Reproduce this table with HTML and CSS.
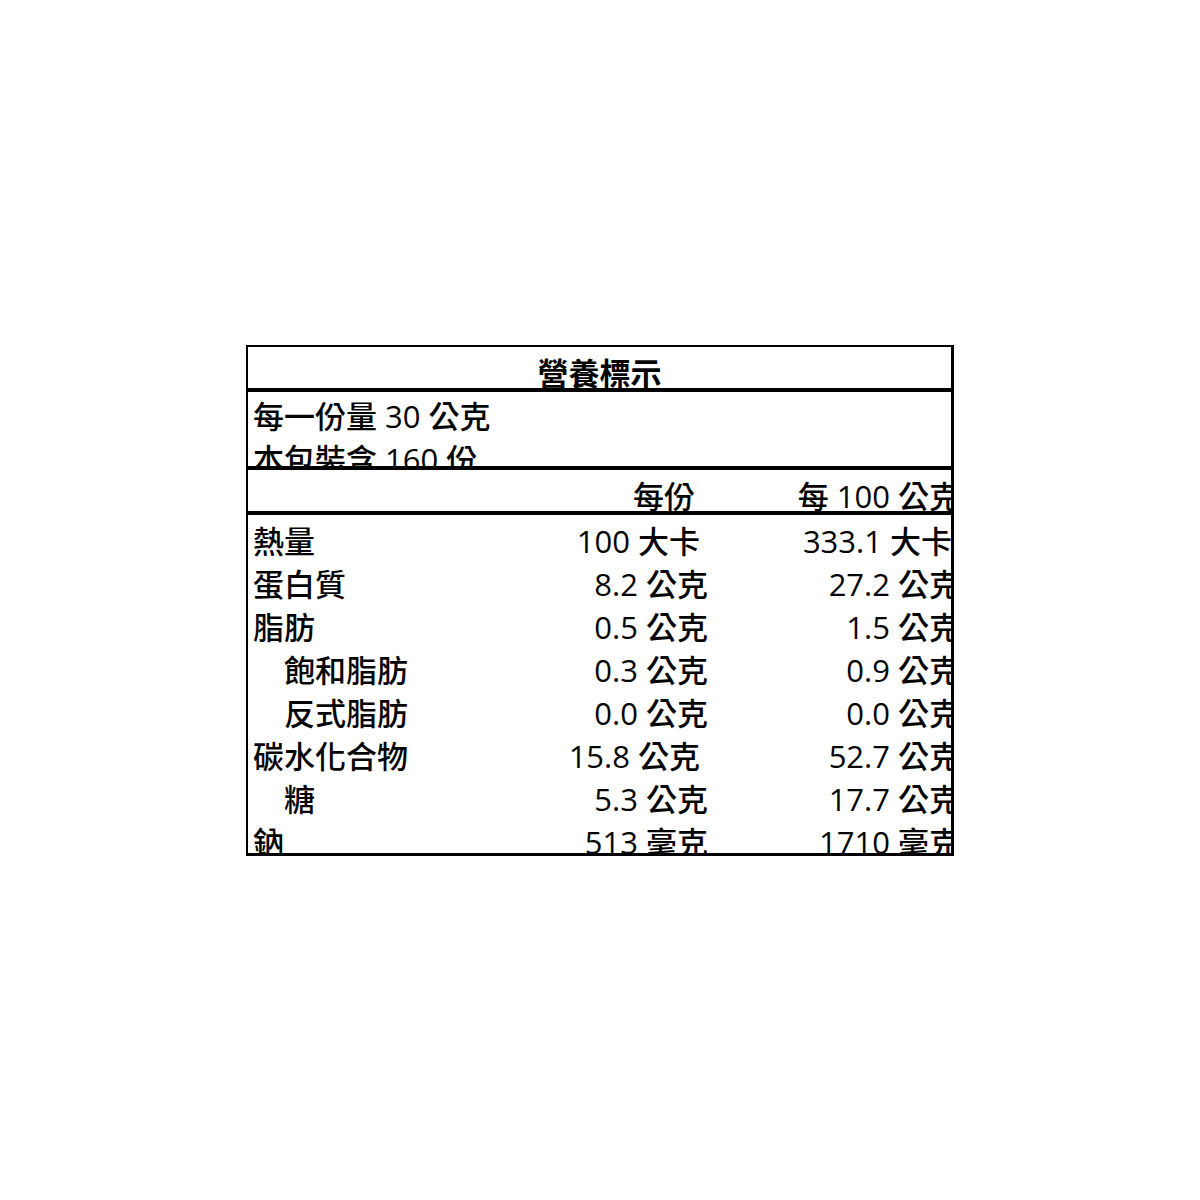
FILE: index.html
```html
<!DOCTYPE html>
<html lang="zh-Hant">
<head>
<meta charset="utf-8">
<title>營養標示</title>
<link rel="stylesheet" href="styles.css">
</head>
<body>
<div class="label">
  <div class="title-row"><div class="title">營養標示</div></div>
  <div class="serving">
    <div class="line">每一份量 30 公克</div>
    <div class="line">本包裝含 160 份</div>
  </div>
  <div class="head-row">
    <div class="grid">
      <div class="c1"></div>
      <div class="c2 pad-h">每份</div>
      <div class="c3">每 100 公克</div>
    </div>
  </div>
  <div class="data">
    <div class="grid">
      <div class="c1">熱量</div><div class="c2 pad-s">100 大卡</div><div class="c3 pad-s">333.1 大卡</div>
      <div class="c1">蛋白質</div><div class="c2">8.2 公克</div><div class="c3">27.2 公克</div>
      <div class="c1">脂肪</div><div class="c2">0.5 公克</div><div class="c3">1.5 公克</div>
      <div class="c1 indent">飽和脂肪</div><div class="c2">0.3 公克</div><div class="c3">0.9 公克</div>
      <div class="c1 indent">反式脂肪</div><div class="c2">0.0 公克</div><div class="c3">0.0 公克</div>
      <div class="c1">碳水化合物</div><div class="c2 pad-s">15.8 公克</div><div class="c3">52.7 公克</div>
      <div class="c1 indent">糖</div><div class="c2">5.3 公克</div><div class="c3">17.7 公克</div>
      <div class="c1">鈉</div><div class="c2">513 毫克</div><div class="c3">1710 毫克</div>
    </div>
  </div>
</div>
</body>
</html>
```

FILE: styles.css
```css
html, body {
  margin: 0;
  padding: 0;
  background: #ffffff;
}

body {
  font-family: "Open Sans", "Noto Sans CJK TC", sans-serif;
  font-size: 31px;
  font-weight: 500;
  color: #050505;
}

.label {
  margin: 345px 0 0 246px;
  width: 703px;
  height: 506px;
  border: 2px solid #000;
  border-right-width: 3px;
  border-bottom-width: 3px;
  overflow: hidden;
  display: flex;
  flex-direction: column;
}

.title-row {
  flex: none;
  height: 45px;
  box-sizing: border-box;
  padding-top: 5px;
  border-bottom: 4px solid #000;
  overflow: hidden;
}

.title {
  text-align: center;
  font-weight: 700;
  line-height: 43px;
}

.serving {
  flex: none;
  height: 78px;
  box-sizing: border-box;
  padding: 3px 0 0 5px;
  border-bottom: 4px solid #000;
  overflow: hidden;
}

.line {
  line-height: 43px;
  white-space: nowrap;
}

.head-row {
  flex: none;
  height: 45px;
  box-sizing: border-box;
  padding-top: 5px;
  border-bottom: 4px solid #000;
  overflow: hidden;
}

.data {
  flex: 1;
  padding-top: 5px;
  overflow: hidden;
}

.grid {
  display: grid;
  grid-template-columns: 252px 208px 252px;
  grid-auto-rows: 43px;
  line-height: 43px;
  white-space: nowrap;
}

.c1 {
  padding-left: 5px;
}

.c1.indent {
  padding-left: 36px;
}

.c2, .c3 {
  text-align: right;
}

.pad-s {
  padding-right: 8px;
}

.pad-h {
  padding-right: 13px;
}
```
